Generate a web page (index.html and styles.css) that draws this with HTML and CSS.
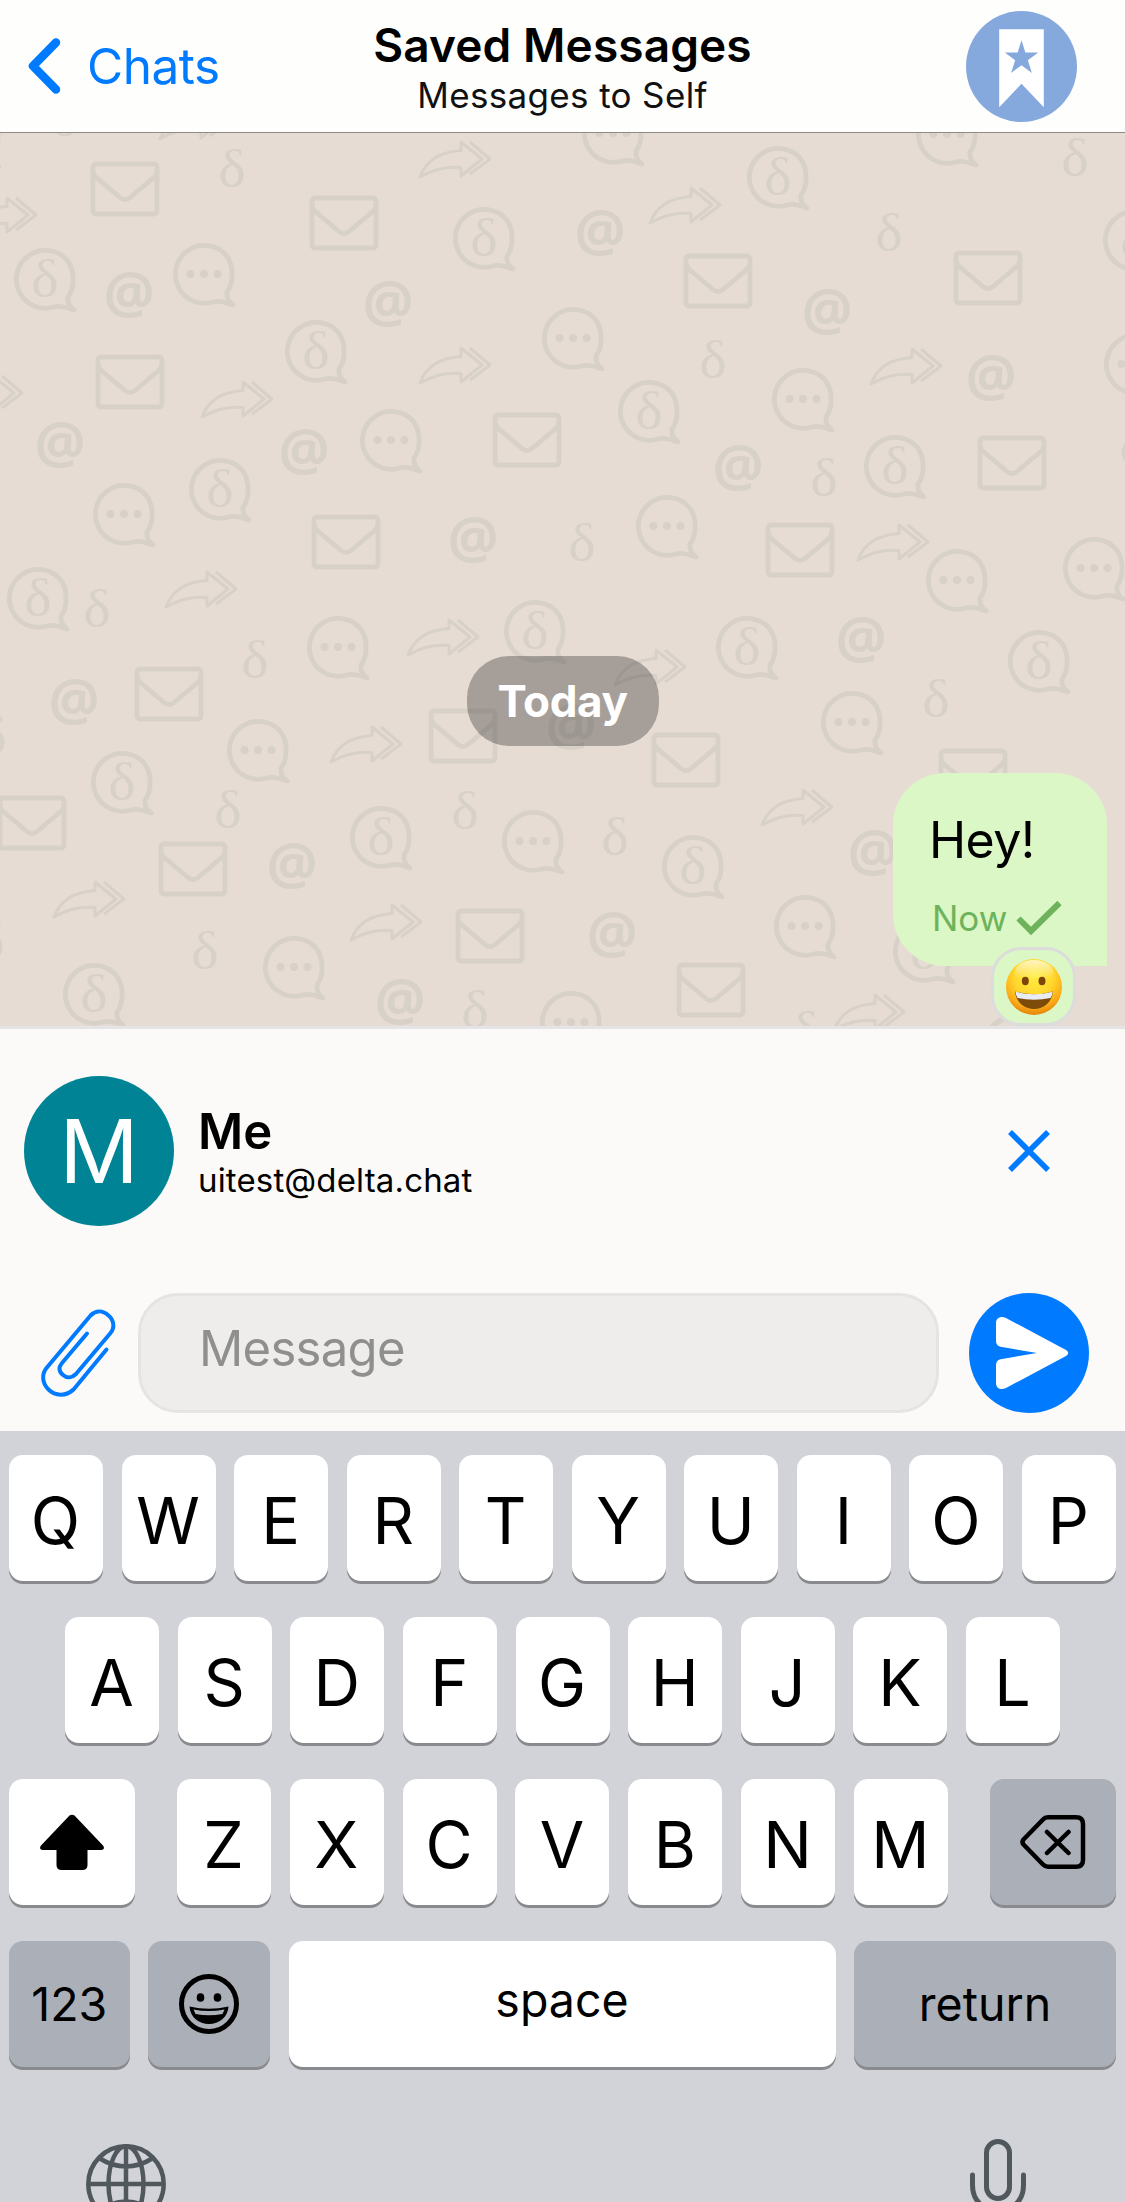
FILE: index.html
```html
<!DOCTYPE html>
<html lang="en">
<head>
<meta charset="utf-8">
<title>Saved Messages</title>
<link rel="stylesheet" href="styles.css">
</head>
<body>
<div class="phone">
  <header class="nav">
    <a class="back">
      <svg class="back-icon" viewBox="0 0 34 58"><path d="M29 5.5 6 29l23 23.5"/></svg>
      <span>Chats</span>
    </a>
    <div class="heading">
      <h1>Saved Messages</h1>
      <p>Messages to Self</p>
    </div>
    <svg class="saved-avatar" viewBox="0 0 112 112">
      <circle cx="56" cy="56" r="56" fill="#86a9dd"/>
      <path d="M33.5 18.5h45V97L56 73.500 33.500 97z" fill="#fff"/>
      <path d="M56 29.500l3.900 12.400h13l-10.500 7.700 4.100 12.900L56 54.700l-10.500 7.800 4.100-12.900-10.500-7.700h13z" fill="#86a9dd"/>
    </svg>
  </header>

  <main class="chat">
    <svg class="wallpaper" viewBox="0 133 1125 893" aria-hidden="true">
      <defs>
        <g id="env"><rect x="-32" y="-25" width="64" height="50" rx="3"/><path d="M-32-17Q-31-13-27-10L-5 8.500q5 4 10 0L27-10Q31-13 32-17"/></g>
        <g id="arr" stroke-width="3"><path d="M-35 18C-28 0-14-7 6-8.500V-17L27 0 6 17V8.500C-8 7-20 9-35 18z"/><path d="M15-17 35 0 15 15"/></g>
        <g id="bub"><path d="M23 18C30 9 30-9 22-19A29 29 0 1 0 9 28q6-2 20 3-7-5-6-13z"/></g>
        <g id="dots"><use href="#bub"/><g stroke="none" class="ink"><circle cx="-13.500" cy="0" r="4"/><circle r="4"/><circle cx="13.500" cy="0" r="4"/></g></g>
        <text id="del" class="glyph delta" y="17" transform="scale(1.12 1)">δ</text>
        <g id="dbub"><use href="#bub"/><use href="#del"/></g>
        <text id="at" class="glyph at" y="17">@</text>
      </defs>
      <g class="lines">
        <use href="#env" x="125" y="189"/><use href="#env" x="344" y="223"/><use href="#env" x="130" y="382"/><use href="#env" x="527" y="440"/><use href="#env" x="346" y="542"/><use href="#env" x="718" y="281"/><use href="#env" x="988" y="278"/><use href="#env" x="1012" y="463"/><use href="#env" x="800" y="550"/><use href="#env" x="169" y="694"/><use href="#env" x="463" y="736"/><use href="#env" x="32" y="823"/><use href="#env" x="193" y="869"/><use href="#env" x="490" y="936"/><use href="#env" x="686" y="760"/><use href="#env" x="973" y="776"/><use href="#env" x="711" y="990"/>
        <use href="#arr" x="455" y="159"/><use href="#arr" x="1" y="215"/><use href="#arr" x="237" y="399"/><use href="#arr" x="455" y="365"/><use href="#arr" x="-13" y="393"/><use href="#arr" x="195" y="121"/><use href="#arr" x="201" y="589"/><use href="#arr" x="685" y="205"/><use href="#arr" x="906" y="366"/><use href="#arr" x="893" y="542"/><use href="#arr" x="443" y="637"/><use href="#arr" x="366" y="744"/><use href="#arr" x="89" y="899"/><use href="#arr" x="386" y="922"/><use href="#arr" x="650" y="667"/><use href="#arr" x="797" y="807"/><use href="#arr" x="869" y="1012"/>
        <use href="#del" x="232" y="169"/><use href="#del" x="65" y="118"/><use href="#del" x="1075" y="158"/><use href="#del" x="889" y="233"/><use href="#del" x="713" y="360"/><use href="#del" x="824" y="478"/><use href="#del" x="582" y="543"/><use href="#del" x="1133" y="445"/><use href="#del" x="97" y="609"/><use href="#del" x="255" y="660"/><use href="#del" x="228" y="810"/><use href="#del" x="465" y="811"/><use href="#del" x="205" y="951"/><use href="#del" x="475" y="1010"/><use href="#del" x="-7" y="736"/><use href="#del" x="-9" y="941"/><use href="#del" x="936" y="699"/><use href="#del" x="615" y="837"/><use href="#del" x="805" y="1031"/>
        <use href="#at" x="129" y="296"/><use href="#at" x="388" y="305"/><use href="#at" x="60" y="446"/><use href="#at" x="304" y="453"/><use href="#at" x="473" y="541"/><use href="#at" x="600" y="234"/><use href="#at" x="827" y="313"/><use href="#at" x="991" y="379"/><use href="#at" x="738" y="469"/><use href="#at" x="74" y="703"/><use href="#at" x="292" y="867"/><use href="#at" x="400" y="1003"/><use href="#at" x="861" y="641"/><use href="#at" x="571" y="728"/><use href="#at" x="873" y="854"/><use href="#at" x="612" y="936"/><use href="#at" x="1008" y="1040"/>
        <use href="#dbub" x="45" y="279"/><use href="#dbub" x="484" y="238"/><use href="#dbub" x="316" y="351"/><use href="#dbub" x="220" y="489"/><use href="#dbub" x="38" y="598"/><use href="#dbub" x="778" y="177"/><use href="#dbub" x="1134" y="240"/><use href="#dbub" x="649" y="411"/><use href="#dbub" x="895" y="466"/><use href="#dbub" x="535" y="631"/><use href="#dbub" x="122" y="782"/><use href="#dbub" x="381" y="837"/><use href="#dbub" x="94" y="994"/><use href="#dbub" x="747" y="647"/><use href="#dbub" x="1039" y="661"/><use href="#dbub" x="693" y="866"/><use href="#dbub" x="924" y="951"/><use href="#dbub" x="-30" y="136"/>
        <use href="#dots" x="204" y="274"/><use href="#dots" x="391" y="440"/><use href="#dots" x="124" y="514"/><use href="#dots" x="613" y="133"/><use href="#dots" x="947" y="134"/><use href="#dots" x="573" y="338"/><use href="#dots" x="803" y="399"/><use href="#dots" x="1135" y="364"/><use href="#dots" x="667" y="526"/><use href="#dots" x="1094" y="568"/><use href="#dots" x="957" y="580"/><use href="#dots" x="338" y="647"/><use href="#dots" x="258" y="750"/><use href="#dots" x="533" y="841"/><use href="#dots" x="294" y="967"/><use href="#dots" x="852" y="722"/><use href="#dots" x="805" y="926"/><use href="#dots" x="571" y="1022"/>
      </g>
    </svg>
    <div class="day">Today</div>
    <div class="message">
      <p class="message-text">Hey!</p>
      <p class="message-meta"><span>Now</span>
        <svg class="check" viewBox="0 0 46 36"><path d="M2.500 18.500 15 31 43.500 3"/></svg>
      </p>
      <div class="reaction">
        <svg viewBox="0 0 58 58">
          <defs>
            <radialGradient id="face" cx=".5" cy=".3" r=".72"><stop offset="0" stop-color="#ffee45"/><stop offset=".5" stop-color="#ffd62c"/><stop offset=".8" stop-color="#fbaa18"/><stop offset="1" stop-color="#e07c05"/></radialGradient>
            <linearGradient id="shine" x1="0" y1="0" x2="0" y2="1"><stop offset="0" stop-color="#fff" stop-opacity=".7"/><stop offset=".8" stop-color="#fff" stop-opacity="0"/></linearGradient>
          </defs>
          <circle cx="29" cy="29" r="28" fill="url(#face)"/>
          <ellipse cx="29" cy="14" rx="19" ry="12" fill="url(#shine)"/>
          <ellipse cx="20.300" cy="23" rx="3.500" ry="4.200" fill="#7d4608"/><ellipse cx="37" cy="23" rx="3.500" ry="4.200" fill="#7d4608"/>
          <path d="M10 33.500Q29 39 48 33.500C47 44 39 51 29 51S11 44 10 33.500z" fill="#7d4c08"/>
          <path d="M10.500 33.700Q29 39 47.500 33.700C47.500 36 46.500 38.500 45.500 40Q29 43.500 12.500 40 10.800 37 10.500 33.700z" fill="#e9ecf2"/>
        </svg>
      </div>
    </div>
  </main>

  <section class="composer">
    <div class="contact">
      <div class="contact-avatar">M</div>
      <div class="contact-text">
        <strong>Me</strong>
        <span>uitest@delta.chat</span>
      </div>
      <svg class="close" viewBox="0 0 42 42"><path d="M2 2 40 40M40 2 2 40"/></svg>
    </div>
    <div class="input-row">
      <svg class="clip" viewBox="40 1309 76 88"><path d="M106.500 1349.500 74 1389C66 1397 55 1396 48.500 1389.500 42 1383 41.500 1374 46.500 1368L90.500 1315.500C96 1310 103 1310.500 108.500 1315.500 114 1320 115 1328 110.500 1333L76 1374C72 1378 67 1378.500 63 1375 58.500 1371.500 58.500 1367 62 1363L87 1333.500"/></svg>
      <div class="field">Message</div>
      <svg class="send" viewBox="0 0 120 120"><circle cx="60" cy="60" r="60" fill="#007aff"/><path d="M31.500 53.700 68 60 31.500 66.300Q27 67.500 27 72V90C27 95.500 32 97.500 37 95L97 63Q101.500 60 97 57L37 25C32 22.500 27 24.500 27 30V48Q27 52.500 31.500 53.700z" fill="#fff"/></svg>
    </div>
  </section>

  <section class="keyboard">
    <div class="row"><b>Q</b><b>W</b><b>E</b><b>R</b><b>T</b><b>Y</b><b>U</b><b>I</b><b>O</b><b>P</b></div>
    <div class="row inset"><b>A</b><b>S</b><b>D</b><b>F</b><b>G</b><b>H</b><b>J</b><b>K</b><b>L</b></div>
    <div class="row">
      <b class="wide"><svg class="shift" viewBox="0 0 64 56"><path d="M29.500 1.500Q32 0 34.500 1.500L63 31.500C65 34 63.500 36 61 36H47.500V51Q47.500 56 42.500 56H21.500Q16.500 56 16.500 51V36H3C.5 36-1 34 1 31.500z"/></svg></b>
      <div class="letters"><b>Z</b><b>X</b><b>C</b><b>V</b><b>B</b><b>N</b><b>M</b></div>
      <b class="wide grey"><svg class="delete" viewBox="0 0 66 54"><path d="M28 2.300H56Q63 2.300 63 9V45Q63 51.700 56 51.700H28Q25 51.700 23 49.500L3.500 29.500Q1.500 27 3.500 24.500L23 4.500Q25 2.300 28 2.300zM27 17 48.500 38M48.500 17 27 38"/></svg></b>
    </div>
    <div class="row bottom">
      <b class="word grey">123</b>
      <b class="grey"><svg class="smiley" viewBox="0 0 60 60"><circle cx="30" cy="30" r="27.500" fill="none" stroke="#000" stroke-width="5"/><ellipse cx="21.500" cy="23.500" rx="3.800" ry="4.300"/><ellipse cx="38.500" cy="23.500" rx="3.800" ry="4.300"/><path d="M10.500 32.500Q30 37 49.500 32.500C49 43 40 50 30 50S11 43 10.500 32.500z"/><path d="M14.500 35.500Q30 38.500 45.500 35.500L43.500 40Q30 42.500 16.500 40z" fill="#abafb7"/></svg></b>
      <b class="word space">space</b>
      <b class="word grey">return</b>
    </div>
    <div class="tools">
      <svg class="globe" viewBox="0 0 80 80"><circle cx="40" cy="40" r="37.700"/><ellipse cx="40" cy="40" rx="17.500" ry="37.700"/><path d="M2 40H78M40 2V78M13 14Q40 31 67 14M13 66Q40 49 67 66"/></svg>
      <svg class="mic" viewBox="0 0 56 92"><rect x="16.500" y="2.500" width="23" height="57" rx="11.500"/><path d="M2.500 36V46C2.500 62 13 71 28 71S53.500 62 53.500 46V36M28 71V89M14 89H42"/></svg>
    </div>
  </section>
</div>
</body>
</html>
```
FILE: styles.css
```css
* { box-sizing: border-box; }
body { margin: 0; background: #d1d3d8; font-family: Inter, "Liberation Sans", sans-serif; color: #000; }
h1, p { margin: 0; font-weight: 400; }
svg { display: block; flex: none; }

.phone { width: 1125px; height: 2202px; overflow: hidden; display: flex; flex-direction: column; }

.nav {
  height: 133px; flex: none; padding: 0 48px 0 27px;
  display: grid; grid-template-columns: 1fr auto 1fr; align-items: center;
  background: #fefefd; border-bottom: 1px solid #8f8a86;
}
.back { display: flex; align-items: center; gap: 26px; color: #007aff; font-size: 49.500px; line-height: 62px; letter-spacing: -0.5px; }
.back-icon { width: 34px; height: 58px; fill: none; stroke: #007aff; stroke-width: 8.500; stroke-linecap: round; stroke-linejoin: round; }
.heading { align-self: start; padding: 17px 0 0 21px; text-align: center; }
.heading h1 { font-size: 46px; line-height: 56px; font-weight: 600; letter-spacing: .1px; }
.heading p { margin-top: 2px; font-size: 35px; line-height: 40px; letter-spacing: .35px; color: #111; }
.saved-avatar { width: 111px; height: 111px; justify-self: end; }

.chat { position: relative; height: 893px; flex: none; overflow: hidden; background: #e6dcd3; padding: 523px 18px 0; display: flex; flex-direction: column; }
.wallpaper { position: absolute; left: 0; top: 0; width: 1125px; height: 893px; }
.lines { fill: none; stroke: #d8d1c8; stroke-width: 4.800; stroke-linejoin: round; }
.ink { fill: #d8d1c8; }
.glyph { fill: #d8d1c8; stroke: none; text-anchor: middle; }
.delta { font: 52px "Liberation Serif", serif; }
.at { font: bold 57px "Open Sans", sans-serif; }
.day { position: relative; align-self: center; width: 192px; height: 90px; border-radius: 42px; background: rgba(0,0,0,.28); color: #fff; font-size: 44px; font-weight: 700; line-height: 90px; letter-spacing: -.4px; text-align: center; }
.message { position: relative; align-self: flex-end; margin-top: 27px; width: 214px; height: 193px; padding: 37px 0 0 36px; background: #dbf7c5; border-radius: 52px 52px 0 52px; }
.message-text { font-size: 50px; line-height: 60px; letter-spacing: -.6px; }
.message-meta { margin-top: 27px; padding-left: 3px; display: flex; align-items: center; gap: 9px; font-size: 35px; line-height: 42px; color: #6eb35b; }
.check { width: 46px; height: 36px; fill: none; stroke: #6eb35b; stroke-width: 6; }
.reaction { position: absolute; left: 98px; top: 174px; width: 85px; height: 79px; border: 3px solid #dcdcdc; border-radius: 30px; background: #dbf7c5; display: flex; align-items: center; justify-content: center; }
.reaction svg { width: 58px; height: 58px; }

.composer { height: 405px; flex: none; background: #fbfaf8; border-top: 3px solid #e4e4e6; padding-top: 47px; }
.contact { display: flex; align-items: center; height: 150px; padding: 0 75px 0 24px; }
.contact-avatar { width: 150px; height: 150px; border-radius: 50%; background: #008495; color: #fff; font-size: 88px; line-height: 150px; text-align: center; }
.contact-text { margin-left: 24px; flex: 1; display: flex; flex-direction: column; padding-top: 2px; }
.contact-text strong { font-size: 49px; line-height: 56px; font-weight: 600; }
.contact-text span { font-size: 33px; line-height: 42px; letter-spacing: .15px; margin-top: -1px; }
.close { width: 42px; height: 42px; fill: none; stroke: #007aff; stroke-width: 5.500; }
.input-row { display: flex; align-items: center; margin-top: 67px; padding: 0 36px 0 40px; }
.clip { width: 76px; height: 88px; fill: none; stroke: #007aff; stroke-width: 4; stroke-linecap: round; }
.field { margin: 0 30px 0 22px; flex: 1; height: 120px; border: 3px solid #e4e4e4; border-radius: 40px; background: #eeedeb; color: #8f8f8e; font-size: 49px; line-height: 106px; padding-left: 58px; letter-spacing: -.7px; }
.send { width: 120px; height: 120px; }

.keyboard { height: 771px; flex: none; background: #d1d3d8; padding: 24px 9px 0; display: flex; flex-direction: column; gap: 36px; overflow: hidden; }
.row { flex: none; display: flex; justify-content: space-between; }
.inset { padding: 0 56px; }
.letters { width: 771px; display: flex; justify-content: space-between; }
.row b { width: 94px; height: 126px; border-radius: 14px; background: #fff; box-shadow: 0 3px 0 #898a8d; font-weight: 400; font-size: 64.500px; line-height: 120px; padding: 5px 1px 0 0; text-align: center; display: flex; align-items: center; justify-content: center; }
.row .wide { width: 126px; padding: 0; }
.row .grey { background: #abafb7; padding: 0; }
.bottom { display: grid; grid-template-columns: 120.500px 122px 547px 1fr; gap: 18.500px; }
.bottom b { width: auto; }
.bottom .word { font-size: 46.500px; }
.bottom .space { padding: 0 0 8px; }
.shift { width: 64px; height: 56px; }
.delete { width: 66px; height: 54px; fill: none; stroke: #000; stroke-width: 4.500; stroke-linecap: round; stroke-linejoin: round; }
.smiley { width: 60px; height: 60px; }
.tools { display: flex; justify-content: space-between; align-items: flex-start; padding: 36px 90px 0 77px; height: 99px; flex: none; }
.globe { width: 80px; height: 80px; margin-top: 5px; fill: none; stroke: #50575d; stroke-width: 4.500; }
.mic { width: 56px; height: 92px; fill: none; stroke: #50575d; stroke-width: 5; stroke-linecap: round; }
```
